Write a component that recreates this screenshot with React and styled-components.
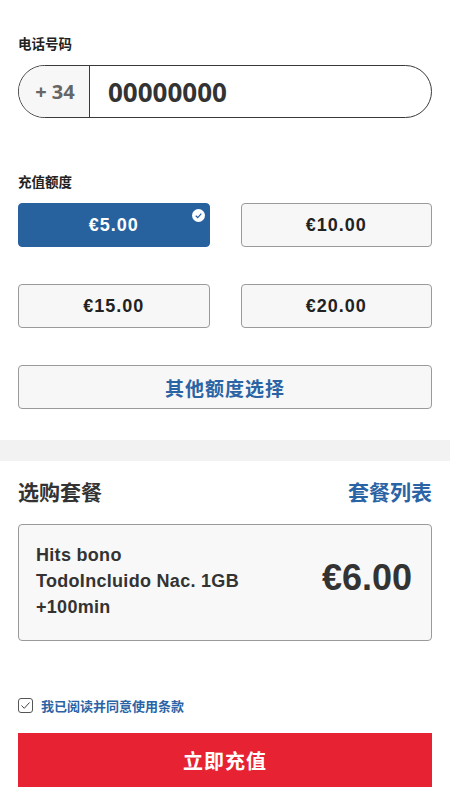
import React from "react";
import styled, { createGlobalStyle } from "styled-components";

const Global = createGlobalStyle`
  html, body { margin: 0; padding: 0; background: #fff; }
  body { font-family: "Liberation Sans", Arial, "Noto Sans CJK SC", sans-serif; color: #333; }
  * { box-sizing: border-box; }
`;

const Page = styled.div`
  width: 450px;
  display: flex;
  flex-direction: column;
`;

const Section = styled.div`
  padding: ${(p) => p.$pad || "0 18px"};
  display: flex;
  flex-direction: column;
`;

const Label = styled.div`
  font-size: 13.5px;
  font-weight: bold;
  color: #222;
  line-height: 18px;
  margin-bottom: ${(p) => p.$mb || 12}px;
`;

const PhoneBox = styled.div`
  height: 53px;
  border: 1px solid #3a3a3a;
  border-radius: 27px;
  display: flex;
  overflow: hidden;
`;

const Prefix = styled.div`
  width: 71px;
  background: #f7f7f7;
  border-right: 1px solid #3a3a3a;
  display: flex;
  align-items: center;
  justify-content: center;
  padding-left: 2px;
  font-family: "Open Sans", "Liberation Sans", sans-serif;
  font-weight: 700;
  font-size: 20px;
  color: #666;
`;

const PhoneNumber = styled.div`
  flex: 1;
  display: flex;
  align-items: center;
  padding-left: 18px;
  font-family: "Open Sans", "Liberation Sans", sans-serif;
  font-weight: 700;
  font-size: 26px;
  color: #333;
`;

const Grid = styled.div`
  display: grid;
  grid-template-columns: 1fr 1fr;
  column-gap: 31px;
  row-gap: 37px;
`;

const AmountBtn = styled.div`
  position: relative;
  height: 44px;
  border-radius: 4px;
  display: flex;
  align-items: center;
  justify-content: center;
  font-size: ${(p) => (p.$wide ? 19 : 18)}px;
  font-weight: bold;
  letter-spacing: 1px;
  grid-column: ${(p) => (p.$wide ? "1 / span 2" : "auto")};
  background: ${(p) => (p.$active ? "#27629f" : "#f7f7f7")};
  color: ${(p) => (p.$active ? "#fff" : p.$blue ? "#2a64a4" : "#222")};
  border: 1px solid ${(p) => (p.$active ? "#27629f" : "#9a9a9a")};
`;

const CheckBadge = styled.svg`
  position: absolute;
  top: 5px;
  right: 4px;
  width: 13px;
  height: 13px;
`;

const Band = styled.div`
  height: 21px;
  background: #f2f2f2;
  margin: 31px 0 18px;
`;

const HeadRow = styled.div`
  display: flex;
  justify-content: space-between;
  align-items: center;
  height: 24px;
  margin-bottom: 21px;
`;

const Title = styled.div`
  font-size: 21px;
  font-weight: bold;
  color: ${(p) => (p.$blue ? "#2a64a4" : "#333")};
`;

const Card = styled.div`
  height: 117px;
  background: #f8f8f8;
  border: 1px solid #9a9a9a;
  border-radius: 4px;
  display: flex;
  align-items: center;
  justify-content: space-between;
  padding: 0 19px 4px 17px;
`;

const CardName = styled.div`
  display: flex;
  flex-direction: column;
`;

const NameLine = styled.span`
  font-size: 18px;
  font-weight: bold;
  letter-spacing: 0.3px;
  line-height: 26px;
  color: #333;
`;

const Price = styled.div`
  font-size: 36px;
  font-weight: bold;
  color: #333;
  margin-bottom: 6px;
`;

const AgreeRow = styled.label`
  display: flex;
  align-items: center;
  gap: 8px;
  margin: 56px 0 20px;
  height: 16px;
`;

const Box = styled.span`
  width: 15px;
  height: 15px;
  border: 1px solid #555;
  border-radius: 3px;
  display: flex;
  align-items: center;
  justify-content: center;
`;

const AgreeText = styled.span`
  font-size: 13px;
  font-weight: bold;
  color: #2a64a4;
`;

const Submit = styled.div`
  height: 54px;
  background: #e62233;
  display: flex;
  align-items: center;
  justify-content: center;
  color: #fff;
  font-size: 20px;
  font-weight: bold;
  letter-spacing: 1px;
`;

export default function App() {
  return (
    <Page>
      <Global />
      <Section $pad="36px 18px 0">
        <Label $mb={11}>电话号码</Label>
        <PhoneBox>
          <Prefix>+ 34</Prefix>
          <PhoneNumber>00000000</PhoneNumber>
        </PhoneBox>
      </Section>
      <Section $pad="56px 18px 0">
        <Label $mb={11}>充值额度</Label>
        <Grid>
          <AmountBtn $active>
            €5.00
            <CheckBadge viewBox="0 0 14 14">
              <circle cx="7" cy="7" r="7" fill="#fff" />
              <path d="M4 7.2 L6.2 9.2 L10 5" stroke="#27629f" strokeWidth="1.3" fill="none" />
            </CheckBadge>
          </AmountBtn>
          <AmountBtn>€10.00</AmountBtn>
          <AmountBtn>€15.00</AmountBtn>
          <AmountBtn>€20.00</AmountBtn>
          <AmountBtn $wide $blue>其他额度选择</AmountBtn>
        </Grid>
      </Section>
      <Band />
      <Section>
        <HeadRow>
          <Title>选购套餐</Title>
          <Title $blue>套餐列表</Title>
        </HeadRow>
        <Card>
          <CardName>
            <NameLine>Hits bono</NameLine>
            <NameLine>TodoIncluido Nac. 1GB</NameLine>
            <NameLine>+100min</NameLine>
          </CardName>
          <Price>€6.00</Price>
        </Card>
        <AgreeRow>
          <Box>
            <svg width="11" height="11" viewBox="0 0 11 11">
              <path d="M1.5 5.5 L4.3 8.3 L9.5 2.5" stroke="#444" strokeWidth="1" fill="none" />
            </svg>
          </Box>
          <AgreeText>我已阅读并同意使用条款</AgreeText>
        </AgreeRow>
        <Submit>立即充值</Submit>
      </Section>
    </Page>
  );
}
